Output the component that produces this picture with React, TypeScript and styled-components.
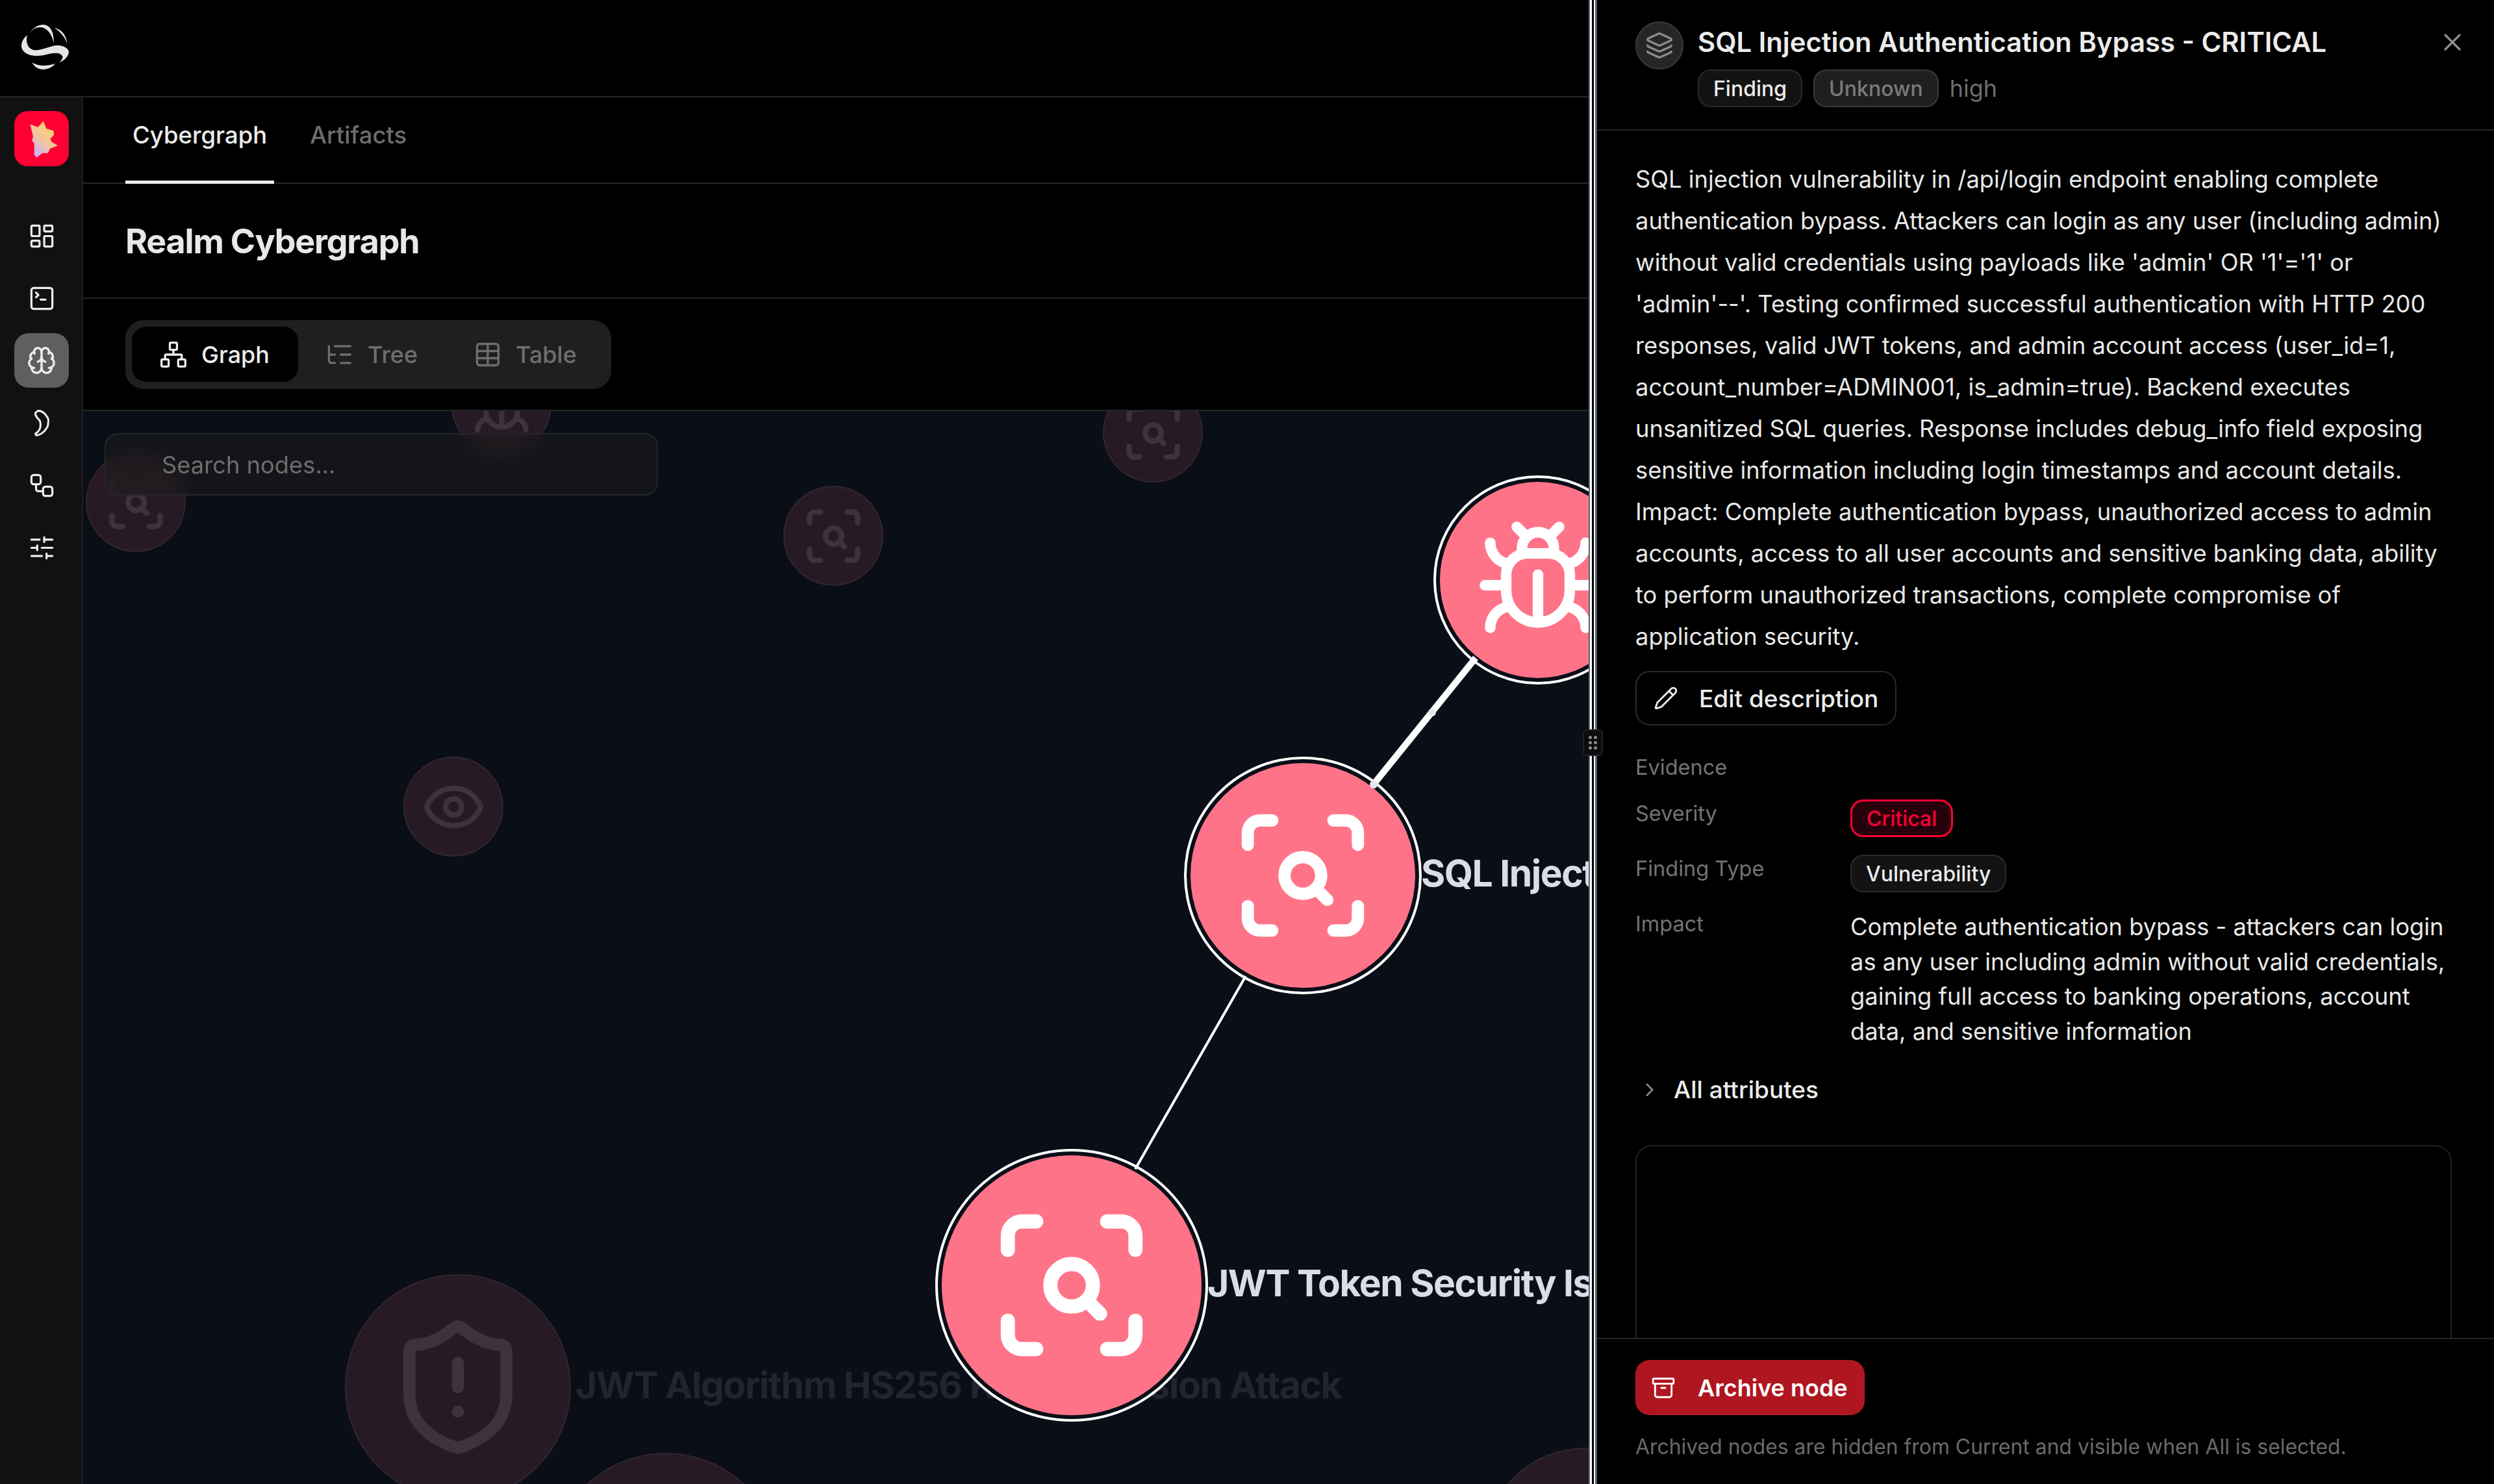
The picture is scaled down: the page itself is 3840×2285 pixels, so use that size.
import React from "react";
import styled, { createGlobalStyle } from "styled-components";
import {
  Archive,
  Brain,
  Bug,
  ChevronRight,
  Eye,
  Layers,
  LayoutDashboard,
  ListTree,
  Network,
  Pencil,
  ScanSearch,
  ShieldAlert,
  SlidersHorizontal,
  SquareTerminal,
  Table,
  Workflow,
  X,
} from "lucide-react";

const GlobalStyle = createGlobalStyle`
  html, body {
    margin: 0;
    padding: 0;
    background: #000;
  }
  body {
    font-family: Inter, "Noto Sans", sans-serif;
    color: #e8e8e8;
  }
  * {
    box-sizing: border-box;
  }
`;

const Page = styled.div`
  display: flex;
  width: 100vw;
  height: 100vh;
  overflow: hidden;
  background: #000;
`;

const Main = styled.div`
  display: flex;
  flex-direction: column;
  width: 2446px;
  flex: none;
`;

const TopBar = styled.div`
  display: flex;
  align-items: center;
  height: 150px;
  flex: none;
  padding-left: 20px;
  border-bottom: 2px solid #262626;
`;

const Body = styled.div`
  display: flex;
  flex: 1;
  min-height: 0;
`;

const Sidebar = styled.nav`
  display: flex;
  flex-direction: column;
  align-items: center;
  width: 128px;
  flex: none;
  padding: 21px 0 0 2px;
  background: #111;
  border-right: 2px solid #1f1f1f;
`;

const AppIcon = styled.div`
  width: 84px;
  height: 85px;
  margin-bottom: 65px;
  svg {
    display: block;
  }
`;

const SideButton = styled.div<{ $active?: boolean }>`
  display: flex;
  align-items: center;
  justify-content: center;
  width: 84px;
  height: 84px;
  margin-bottom: 12px;
  border-radius: 22px;
  color: #ececec;
  background: ${(p) => (p.$active ? "#5f5f5f" : "transparent")};
`;

const Content = styled.div`
  display: flex;
  flex-direction: column;
  flex: 1;
  min-width: 0;
`;

const TabBar = styled.div`
  display: flex;
  gap: 44px;
  height: 133px;
  flex: none;
  padding-left: 65px;
  border-bottom: 2px solid #262626;
`;

const Tab = styled.div<{ $active?: boolean }>`
  position: relative;
  padding: 35px 11px 0;
  font-size: 36.5px;
  line-height: 46px;
  font-weight: 500;
  color: ${(p) => (p.$active ? "#ececec" : "#6e6e6e")};
  border-bottom: 5px solid ${(p) => (p.$active ? "#ececec" : "transparent")};
  height: 133px;
`;

const TitleRow = styled.div`
  display: flex;
  align-items: center;
  height: 177px;
  flex: none;
  padding: 2px 0 0 65px;
  border-bottom: 2px solid #262626;
`;

const PageTitle = styled.h1`
  margin: 0;
  font-size: 52px;
  font-weight: 700;
  letter-spacing: -1.2px;
  color: #e8e8e8;
`;

const ViewRow = styled.div`
  display: flex;
  align-items: center;
  height: 173px;
  flex: none;
  padding-left: 65px;
  border-bottom: 2px solid #262626;
`;

const ViewToggle = styled.div`
  display: flex;
  align-items: center;
  height: 106px;
  padding: 0 9px 0 10px;
  border-radius: 28px;
  background: #1f1f1f;
`;

const ViewItem = styled.div<{ $active?: boolean }>`
  display: flex;
  align-items: center;
  gap: 21px;
  height: 85px;
  padding: 0 44px 0 42px;
  border-radius: 22px;
  font-size: 36px;
  font-weight: 500;
  color: ${(p) => (p.$active ? "#ececec" : "#6e6e6e")};
  background: ${(p) => (p.$active ? "#000" : "transparent")};
`;

const Canvas = styled.div`
  position: relative;
  flex: 1;
  overflow: hidden;
  background: #0a0e17;
`;

const SearchBox = styled.div`
  position: absolute;
  left: 33px;
  top: 34px;
  width: 852px;
  height: 96px;
  z-index: 3;
  display: flex;
  align-items: center;
  padding: 2px 0 0 86px;
  border: 2px solid #23262b;
  border-radius: 20px;
  background: rgba(28, 28, 28, 0.55);
  backdrop-filter: blur(14px);
  font-size: 36.3px;
  color: #6e6e6e;
`;

const Node = styled.div<{ $x: number; $y: number; $r: number; $dim?: boolean }>`
  position: absolute;
  left: ${(p) => p.$x - p.$r}px;
  top: ${(p) => p.$y - p.$r}px;
  width: ${(p) => p.$r * 2}px;
  height: ${(p) => p.$r * 2}px;
  display: flex;
  align-items: center;
  justify-content: center;
  border-radius: 50%;
  color: ${(p) => (p.$dim ? "#3f323c" : "#fff")};
  background: ${(p) => (p.$dim ? "#281a24" : "#ff7389")};
  box-shadow: ${(p) =>
    p.$dim ? "0 0 0 2px #32262f" : "0 0 0 6px #0a0e17, 0 0 0 10px #fff"};
`;

const NodeLabel = styled.span<{ $dim?: boolean }>`
  position: absolute;
  left: calc(100% + 9px);
  top: 50%;
  transform: translateY(calc(-50% - 4px));
  white-space: nowrap;
  font-size: 57px;
  font-weight: 700;
  letter-spacing: -1.5px;
  color: ${(p) => (p.$dim ? "#22242e" : "#d9dde8")};
`;

const EdgeLayer = styled.svg`
  position: absolute;
  left: 0;
  top: 0;
  width: 100%;
  height: 100%;
  pointer-events: none;
`;

const Splitter = styled.div`
  position: relative;
  width: 13px;
  flex: none;
  background: linear-gradient(
    90deg,
    #5d6470 0 2px,
    #fff 2px 5px,
    #000 5px 8px,
    #fff 8px 10px,
    #5d6470 10px 13px
  );
`;

const Grip = styled.div`
  position: absolute;
  left: -9px;
  top: 1123px;
  width: 31px;
  height: 41px;
  display: grid;
  grid-template-columns: 5px 5px;
  gap: 3px 3px;
  align-content: center;
  justify-content: center;
  background: #0c0c0c;
  border: 2px solid #222;
  border-radius: 6px;
  span {
    width: 5px;
    height: 5px;
    border-radius: 50%;
    background: #8a8a8a;
  }
`;

const Panel = styled.aside`
  display: flex;
  flex-direction: column;
  flex: 1;
  min-width: 0;
  background: #000;
`;

const PanelHeader = styled.header`
  display: flex;
  gap: 22px;
  height: 201px;
  flex: none;
  padding: 33px 42px 0 59px;
  border-bottom: 2px solid #262626;
`;

const Avatar = styled.div`
  display: flex;
  align-items: center;
  justify-content: center;
  width: 74px;
  height: 74px;
  flex: none;
  border-radius: 50%;
  color: #8c8c8c;
  background: #262626;
  border: 2px solid #3a3a3a;
`;

const HeaderText = styled.div`
  flex: 1;
  min-width: 0;
`;

const NodeTitle = styled.div`
  font-size: 41.8px;
  line-height: 64px;
  font-weight: 600;
  color: #ececec;
`;

const BadgeRow = styled.div`
  display: flex;
  align-items: center;
  gap: 17px;
  margin-top: 10px;
`;

const Badge = styled.span<{ $tone?: "plain" | "muted" | "danger" }>`
  display: inline-flex;
  align-items: center;
  height: 58px;
  padding: 0 22px;
  border-radius: 20px;
  font-size: 32px;
  font-weight: 500;
  color: ${(p) =>
    p.$tone === "muted" ? "#7a7a7a" : p.$tone === "danger" ? "#ff0033" : "#ececec"};
  background: ${(p) =>
    p.$tone === "muted" ? "#1f1f1f" : p.$tone === "danger" ? "#26000a" : "#131313"};
  border: ${(p) => (p.$tone === "danger" ? "3px solid #ff0033" : "2px solid")};
  border-color: ${(p) =>
    p.$tone === "muted" ? "#3a3a3a" : p.$tone === "danger" ? "#ff0033" : "#2a2a2a"};
`;

const PlainTag = styled.span`
  font-size: 36px;
  color: #6e6e6e;
`;

const CloseButton = styled.div`
  color: #8c8c8c;
  margin-top: 10px;
`;

const PanelScroll = styled.div`
  flex: 1;
  min-height: 0;
  overflow: hidden;
  padding: 43px 65px 0 59px;
`;

const Description = styled.p`
  margin: 0;
  font-size: 36.3px;
  line-height: 64px;
  color: #e8e8e8;
`;

const OutlineButton = styled.div`
  display: inline-flex;
  align-items: center;
  gap: 32px;
  height: 84px;
  margin-top: 21px;
  padding: 0 26px;
  border: 2px solid #2a2a2a;
  border-radius: 22px;
  font-size: 37px;
  font-weight: 500;
  color: #ececec;
`;

const Attributes = styled.div`
  display: grid;
  grid-template-columns: 331px 1fr;
  row-gap: 27px;
  align-items: start;
  margin-top: 43px;
`;

const AttrLabel = styled.div`
  font-size: 32.5px;
  line-height: 44px;
  color: #737373;
`;

const AttrText = styled.div`
  font-size: 36.3px;
  line-height: 53.6px;
  color: #e8e8e8;
`;

const Disclosure = styled.div`
  display: flex;
  align-items: center;
  gap: 20px;
  margin-top: 41px;
  padding-left: 5px;
  font-size: 37px;
  line-height: 44px;
  font-weight: 500;
  color: #ececec;
  svg {
    color: #8c8c8c;
  }
`;

const EmptyBox = styled.div`
  height: 420px;
  margin-top: 63px;
  border: 2px solid #222;
  border-radius: 26px;
`;

const PanelFooter = styled.footer`
  height: 225px;
  flex: none;
  padding: 32px 0 0 59px;
  border-top: 2px solid #262626;
`;

const DangerButton = styled.div`
  display: inline-flex;
  align-items: center;
  gap: 34px;
  height: 85px;
  padding: 0 26px 0 24px;
  border-radius: 22px;
  font-size: 36px;
  font-weight: 600;
  color: #fff;
  background: #b0161f;
`;

const Hint = styled.div`
  margin-top: 27px;
  font-size: 31.9px;
  line-height: 44px;
  color: #6a6a6a;
`;

const LogoMark = () => (
  <svg width="100" height="100" viewBox="0 0 300 300" fill="#e5e5e5">
    <path d="M66 90C38 112 30 145 50 166C78 194 125 188 170 176C200 170 222 172 230 190C228 200 222 210 215 217C240 205 256 188 258 168C256 150 232 138 205 137C170 140 140 158 105 160C75 160 55 130 66 90Z" />
    <path d="M75 85C95 50 130 35 155 45C180 55 190 90 188 128C180 85 160 62 135 55C110 50 90 62 75 85Z" />
    <path d="M192 58C225 62 248 95 250 130C240 100 220 75 192 58Z" />
    <path d="M88 217C115 235 155 235 195 222C170 255 110 262 88 217Z" />
  </svg>
);

const AppGlyph = () => (
  <svg width="84" height="85" viewBox="6 438 252 255">
    <defs>
      <linearGradient id="blob" x1="0.8" y1="0" x2="0.2" y2="1">
        <stop offset="0" stopColor="#f8d56a" />
        <stop offset="0.5" stopColor="#f3c79a" />
        <stop offset="1" stopColor="#c8b0ff" />
      </linearGradient>
    </defs>
    <rect x="6" y="438" width="252" height="255" rx="62" fill="#ff0033" />
    <path
      d="M82 502L115 515L140 488L152 520L185 530L187 548L170 565L175 580L203 597L170 610L160 630L135 630L110 650L100 640L100 585L90 575L95 555Z"
      fill="url(#blob)"
      stroke="url(#blob)"
      strokeWidth="4"
      strokeLinejoin="round"
    />
  </svg>
);

const CrescentIcon = () => (
  <svg
    width="43"
    height="43"
    viewBox="0 0 24 24"
    fill="none"
    stroke="currentColor"
    strokeWidth="1.7"
    strokeLinejoin="round"
  >
    <path d="M8.5 1.5C12 1.2 13.5 3 15 4.5C15.5 6 17.5 7 17.5 9C18 10.5 17 12 17.3 13.5C17 16 15 17.5 14 19C12 21 9 22.5 7 22.5L6.5 21C9 19.5 11 17 10.8 13.5C11 10 9.5 9 8 7.5C7 6 6 5 6.5 3Z" />
  </svg>
);

export default function App() {
  return (
    <>
      <GlobalStyle />
      <Page>
        <Main>
          <TopBar>
            <LogoMark />
          </TopBar>
          <Body>
            <Sidebar>
              <AppIcon>
                <AppGlyph />
              </AppIcon>
              <SideButton>
                <LayoutDashboard size={43} strokeWidth={1.8} />
              </SideButton>
              <SideButton>
                <SquareTerminal size={43} strokeWidth={1.8} />
              </SideButton>
              <SideButton $active>
                <Brain size={46} strokeWidth={1.8} />
              </SideButton>
              <SideButton>
                <CrescentIcon />
              </SideButton>
              <SideButton>
                <Workflow size={43} strokeWidth={1.8} />
              </SideButton>
              <SideButton>
                <SlidersHorizontal size={43} strokeWidth={1.8} />
              </SideButton>
            </Sidebar>
            <Content>
              <TabBar>
                <Tab $active>Cybergraph</Tab>
                <Tab>Artifacts</Tab>
              </TabBar>
              <TitleRow>
                <PageTitle>Realm Cybergraph</PageTitle>
              </TitleRow>
              <ViewRow>
                <ViewToggle>
                  <ViewItem $active>
                    <Network size={44} strokeWidth={1.8} />
                    Graph
                  </ViewItem>
                  <ViewItem>
                    <ListTree size={44} strokeWidth={1.8} />
                    Tree
                  </ViewItem>
                  <ViewItem>
                    <Table size={44} strokeWidth={1.8} />
                    Table
                  </ViewItem>
                </ViewToggle>
              </ViewRow>
              <Canvas>
                <SearchBox>Search nodes...</SearchBox>
                <Node $dim $x={644} $y={-9} $r={75}>
                  <Bug size={99} />
                </Node>
                <Node $dim $x={81} $y={140} $r={75}>
                  <ScanSearch size={99} />
                </Node>
                <Node $dim $x={1155} $y={192} $r={75}>
                  <ScanSearch size={99} />
                </Node>
                <Node $dim $x={1647} $y={33} $r={75}>
                  <ScanSearch size={99} />
                </Node>
                <Node $dim $x={570} $y={609} $r={75}>
                  <Eye size={99} />
                </Node>
                <Node $dim $x={577} $y={1503} $r={172}>
                  <ShieldAlert size={224} />
                  <NodeLabel $dim>JWT Algorithm HS256 Key Confusion Attack</NodeLabel>
                </Node>
                <Node $dim $x={897} $y={1782} $r={176}>
                  <ScanSearch size={224} />
                </Node>
                <Node $dim $x={2312} $y={1751} $r={153}>
                  <ScanSearch size={200} />
                </Node>
                <Node $x={2240} $y={260} $r={151}>
                  <Bug size={196} />
                </Node>
                <Node $x={1878} $y={715} $r={173}>
                  <ScanSearch size={226} />
                  <NodeLabel>SQL Injection Authentication Bypass - CRITICAL</NodeLabel>
                </Node>
                <Node $x={1522} $y={1346} $r={200}>
                  <ScanSearch size={262} />
                  <NodeLabel>JWT Token Security Issues</NodeLabel>
                </Node>
                <EdgeLayer>
                  <line x1={2144} y1={380} x2={1985} y2={577} stroke="#fff" strokeWidth={10} />
                  <line x1={1790} y1={870} x2={1620} y2={1167} stroke="#fff" strokeWidth={4} />
                  <circle cx={2077} cy={464} r={6} fill="#e2e8f0" />
                  <circle cx={1987} cy={575} r={6} fill="#e2e8f0" />
                </EdgeLayer>
              </Canvas>
            </Content>
          </Body>
        </Main>
        <Splitter>
          <Grip>
            <span />
            <span />
            <span />
            <span />
            <span />
            <span />
          </Grip>
        </Splitter>
        <Panel>
          <PanelHeader>
            <Avatar>
              <Layers size={44} strokeWidth={1.8} />
            </Avatar>
            <HeaderText>
              <NodeTitle>SQL Injection Authentication Bypass - CRITICAL</NodeTitle>
              <BadgeRow>
                <Badge>Finding</Badge>
                <Badge $tone="muted">Unknown</Badge>
                <PlainTag>high</PlainTag>
              </BadgeRow>
            </HeaderText>
            <CloseButton>
              <X size={44} strokeWidth={1.8} />
            </CloseButton>
          </PanelHeader>
          <PanelScroll>
            <Description>
              SQL injection vulnerability in /api/login endpoint enabling complete
              authentication bypass. Attackers can login as any user (including admin)
              without valid credentials using payloads like 'admin' OR '1'='1' or
              'admin'--'. Testing confirmed successful authentication with HTTP 200
              responses, valid JWT tokens, and admin account access (user_id=1,
              account_number=ADMIN001, is_admin=true). Backend executes unsanitized SQL
              queries. Response includes debug_info field exposing sensitive information
              including login timestamps and account details. Impact: Complete
              authentication bypass, unauthorized access to admin accounts, access to all
              user accounts and sensitive banking data, ability to perform unauthorized
              transactions, complete compromise of application security.
            </Description>
            <OutlineButton>
              <Pencil size={38} strokeWidth={1.8} />
              Edit description
            </OutlineButton>
            <Attributes>
              <AttrLabel>Evidence</AttrLabel>
              <div />
              <AttrLabel>Severity</AttrLabel>
              <div>
                <Badge $tone="danger">Critical</Badge>
              </div>
              <AttrLabel>Finding Type</AttrLabel>
              <div>
                <Badge>Vulnerability</Badge>
              </div>
              <AttrLabel>Impact</AttrLabel>
              <AttrText>
                Complete authentication bypass - attackers can login as any user including
                admin without valid credentials, gaining full access to banking operations,
                account data, and sensitive information
              </AttrText>
            </Attributes>
            <Disclosure>
              <ChevronRight size={34} strokeWidth={1.8} />
              All attributes
            </Disclosure>
            <EmptyBox />
          </PanelScroll>
          <PanelFooter>
            <DangerButton>
              <Archive size={38} strokeWidth={1.8} />
              Archive node
            </DangerButton>
            <Hint>Archived nodes are hidden from Current and visible when All is selected.</Hint>
          </PanelFooter>
        </Panel>
      </Page>
    </>
  );
}
